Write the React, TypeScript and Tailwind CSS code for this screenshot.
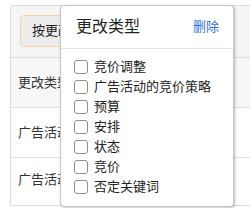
import React from "react";

const font = { fontFamily: '"Liberation Sans", "Noto Sans CJK SC", sans-serif' };

const items = ["竞价调整", "广告活动的竞价策略", "预算", "安排", "状态", "竞价", "否定关键词"];

export default function App() {
  return (
    <div
      className="relative w-[250px] h-[208px] bg-white overflow-hidden text-[#333]"
      style={font}
    >
      <div className="ml-[10px] mt-[5px] w-[260px] border-l border-t border-b border-[#dcdcdc] rounded-tl-[3px]">
        <div className="h-[52px] bg-[#f5f5f5] border-b border-[#dcdcdc] pl-[9px] pt-[9px]">
          <div className="h-[32px] w-[120px] flex items-center pl-[11px] rounded-[4px] bg-[#ececec] border border-[#f2d3a6] text-[13px] text-[#222] whitespace-nowrap overflow-hidden">
            按更改类型筛选
          </div>
        </div>
        <div className="h-[50px] bg-[#f7f7f7] border-b border-[#e0e0e0] flex items-center pl-[7px] text-[13px]">
          更改类型
        </div>
        <div className="h-[50px] border-b border-[#e0e0e0] flex items-center pl-[7px] text-[13px]">
          广告活动
        </div>
        <div className="h-[47px] flex items-center pb-[4px] pl-[7px] text-[13px]">
          广告活动
        </div>
      </div>

      <div className="absolute left-[60px] top-[5px] w-[174px] h-[202px] bg-white border border-[#c6c6c6] rounded-[4px] shadow-[1px_1px_3px_rgba(0,0,0,0.25)]">
        <div className="h-[43px] border-b border-[#e3e3e3] flex items-center justify-between pl-[15px] pr-[14px]">
          <span className="text-[16px] text-[#222]">更改类型</span>
          <span className="text-[13px] text-[#3474dc]">删除</span>
        </div>
        <div className="pt-[8px] pl-[13px] flex flex-col">
          {items.map((t) => (
            <div key={t} className="h-[20px] flex items-center gap-[6px] text-[13px] text-[#222] whitespace-nowrap">
              <span className="w-[14px] h-[14px] border border-[#8f8f8f] rounded-[3px] bg-white shrink-0" />
              <span>{t}</span>
            </div>
          ))}
        </div>
      </div>
    </div>
  );
}
